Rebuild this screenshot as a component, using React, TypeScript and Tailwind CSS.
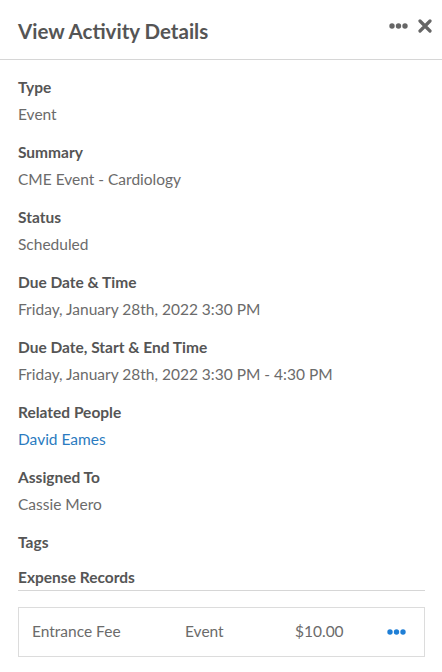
const fields: { label: string; value?: string; link?: boolean }[] = [
  { label: "Type", value: "Event" },
  { label: "Summary", value: "CME Event - Cardiology" },
  { label: "Status", value: "Scheduled" },
  { label: "Due Date & Time", value: "Friday, January 28th, 2022 3:30 PM" },
  { label: "Due Date, Start & End Time", value: "Friday, January 28th, 2022 3:30 PM - 4:30 PM" },
  { label: "Related People", value: "David Eames", link: true },
  { label: "Assigned To", value: "Cassie Mero" },
];

function Dots({ className }: { className?: string }) {
  return (
    <svg width="19" height="6" viewBox="0 0 19 6" className={className} fill="currentColor">
      <circle cx="3" cy="3" r="2.7" />
      <circle cx="9.5" cy="3" r="2.7" />
      <circle cx="16" cy="3" r="2.7" />
    </svg>
  );
}

export default function App() {
  return (
    <div className="w-[442px] h-[672px] bg-white overflow-hidden" style={{ fontFamily: "Lato, 'Open Sans', sans-serif" }}>
      <header className="h-[60px] border-b border-[#d6d6d6] flex items-center justify-between pl-[18px] pr-[10px]">
        <h1 className="text-[20.5px] font-bold text-[#555555] pt-[3px]">View Activity Details</h1>
        <div className="flex items-center gap-[10px] text-[#666666] -mt-[8px]">
          <Dots />
          <svg width="14" height="14" viewBox="0 0 14 14" stroke="currentColor" strokeWidth="3.2" strokeLinecap="round">
            <path d="M2 2 L12 12 M12 2 L2 12" />
          </svg>
        </div>
      </header>

      <div className="px-[18px] pt-[16px]">
        {fields.map((f) => (
          <div key={f.label} className="mb-[16px]">
            <div className="text-[15.5px] leading-[22px] font-bold text-[#555555]">{f.label}</div>
            <div
              className={`mt-[5px] text-[15.5px] leading-[22px] ${f.link ? "text-[#2b7bc0]" : "text-[#6b6b6b]"}`}
            >
              {f.value}
            </div>
          </div>
        ))}

        <div className="text-[15.5px] leading-[22px] font-bold text-[#555555]">Tags</div>

        <div className="mt-[13px] text-[15.5px] leading-[22px] font-bold text-[#555555] border-b border-[#d6d6d6] pb-[2px] w-[407px]">
          Expense Records
        </div>

        <div className="mt-[16px] w-[407px] h-[50px] border border-[#dcdcdc] flex items-center text-[15.5px] text-[#6b6b6b]">
          <span className="w-[166px] pl-[13px]">Entrance Fee</span>
          <span className="w-[110px]">Event</span>
          <span className="w-[92px]">$10.00</span>
          <Dots className="text-[#1f7fd6]" />
        </div>
      </div>
    </div>
  );
}
